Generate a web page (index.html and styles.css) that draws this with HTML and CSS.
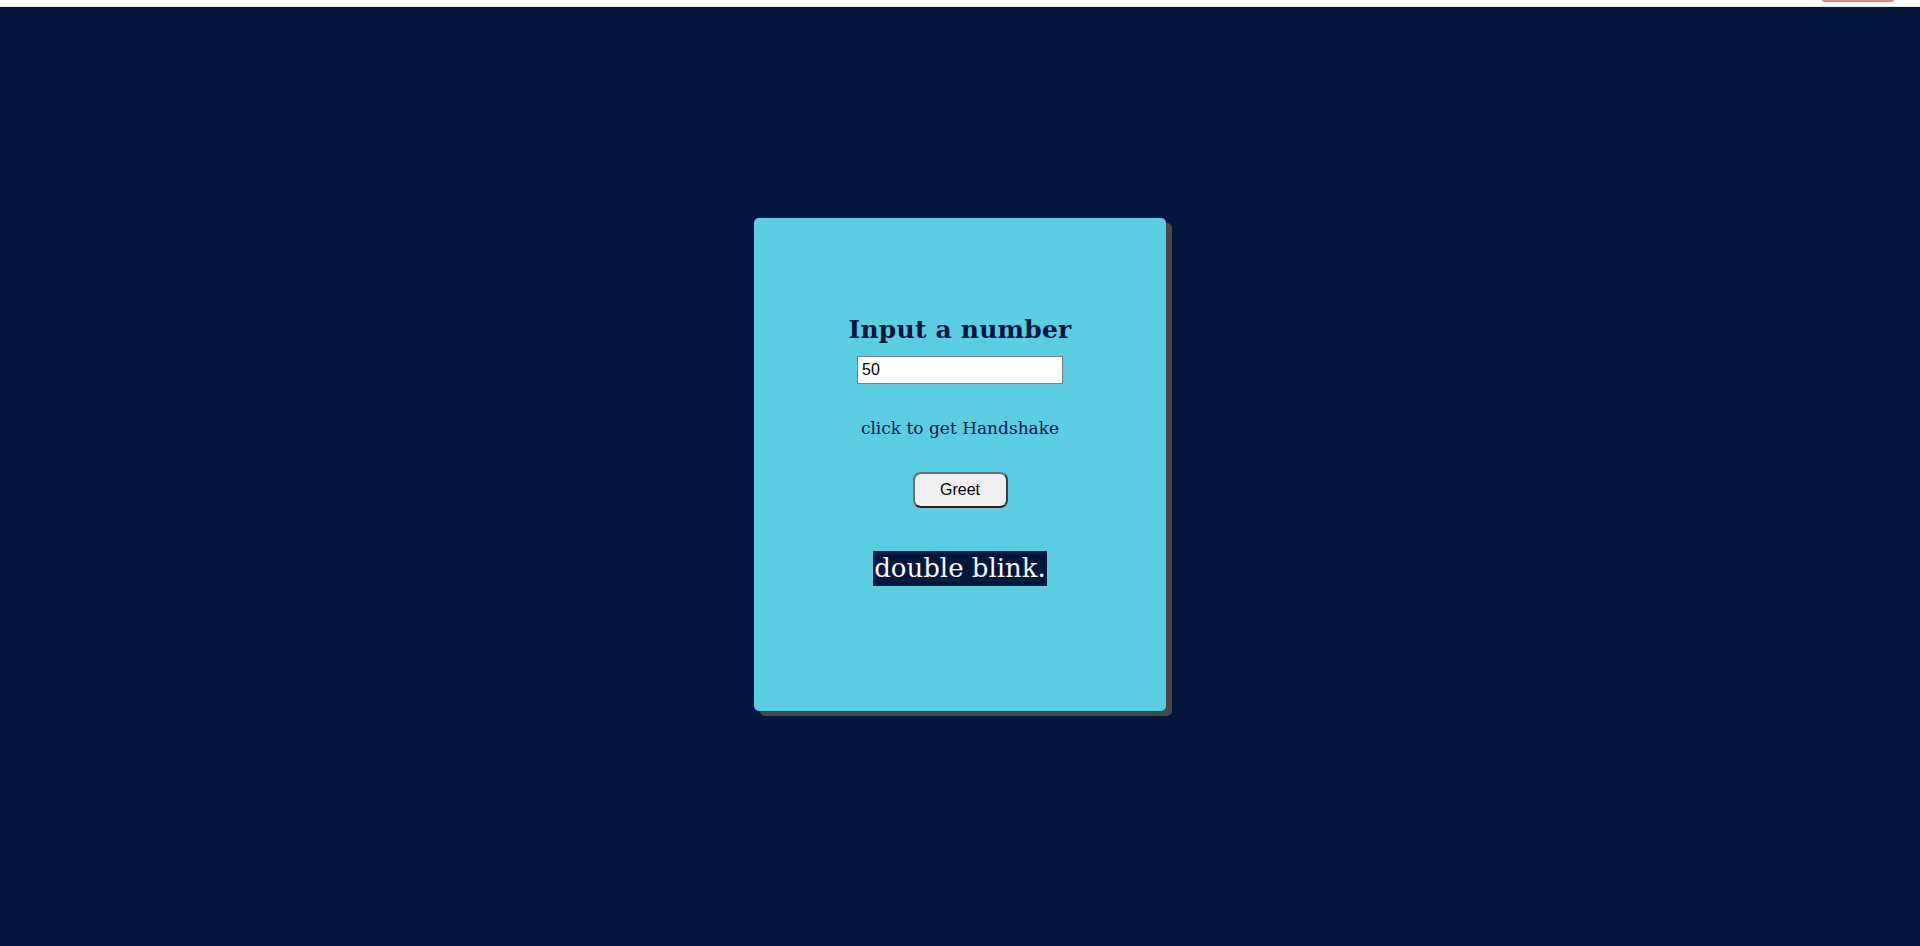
FILE: index.html
```html
<!DOCTYPE html>
<html lang="en">
<head>
<meta charset="utf-8">
<title>Handshake</title>
<link rel="stylesheet" href="styles.css">
</head>
<body>
<div class="topbar"><span class="topbar-tab"></span></div>
<main class="stage">
  <section class="card">
    <h2 class="card-title">Input a number</h2>
    <input class="num-input" type="text" value="50">
    <p class="hint">click to get Handshake</p>
    <button class="greet-btn" type="button">Greet</button>
    <div class="result"><span class="result-text">double blink.</span></div>
  </section>
</main>
</body>
</html>
```

FILE: styles.css
```css
html, body {
  margin: 0;
  padding: 0;
}
body {
  background: #04163e;
  height: 946px;
  overflow: hidden;
  font-family: "DejaVu Serif", "Liberation Serif", serif;
}
.topbar {
  height: 7px;
  background: #ffffff;
  border-bottom: 1px solid #e6e6e6;
  box-sizing: border-box;
  display: flex;
  justify-content: flex-end;
  padding-right: 26px;
}
.topbar-tab {
  width: 72px;
  height: 2px;
  background: #e0887c;
  border-radius: 0 0 2px 2px;
}
.stage {
  display: flex;
  justify-content: center;
  padding-top: 211px;
}
.card {
  width: 412px;
  height: 493px;
  box-sizing: border-box;
  background: #5bcde0;
  border-radius: 5px;
  box-shadow: 6px 5px 0 #474747;
  display: flex;
  flex-direction: column;
  align-items: center;
  padding-top: 97px;
}
.card-title {
  margin: 0;
  font-size: 25px;
  font-weight: bold;
  color: #04163e;
  line-height: 29px;
  letter-spacing: 0.2px;
}
.num-input {
  margin-top: 12px;
  width: 206px;
  height: 28px;
  box-sizing: border-box;
  border: 1px solid #7a7a7a;
  padding: 0 4px;
  font-family: "Liberation Sans", Arial, sans-serif;
  font-size: 16px;
  color: #000;
  background: #fff;
  outline: none;
}
.hint {
  margin: 34px 0 0;
  font-size: 17px;
  line-height: 20px;
  color: #04163e;
}
.greet-btn {
  margin-top: 34px;
  width: 95px;
  height: 36px;
  box-sizing: border-box;
  background: #efefef;
  border: 2px solid;
  border-color: #6e6e6e #3a3a3a #242424 #6e6e6e;
  border-radius: 8px;
  font-family: "Liberation Sans", Arial, sans-serif;
  font-size: 16px;
  color: #000;
  padding: 0;
}
.result {
  margin-top: 43px;
}
.result-text {
  display: inline-block;
  background: #04163e;
  color: #ffffff;
  font-size: 26px;
  line-height: 35px;
  height: 35px;
  padding: 0 1px;
}
```
